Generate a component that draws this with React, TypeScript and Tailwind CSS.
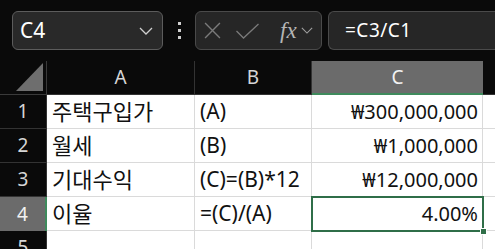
import React from 'react';

const font = { fontFamily: '"Noto Sans", "Noto Sans CJK KR", sans-serif' };

const cols = ['A', 'B', 'C'];

const rows: { n: number; a: string; b: string; c: string }[] = [
  { n: 1, a: '주택구입가', b: '(A)', c: '₩300,000,000' },
  { n: 2, a: '월세', b: '(B)', c: '₩1,000,000' },
  { n: 3, a: '기대수익', b: '(C)=(B)*12', c: '₩12,000,000' },
  { n: 4, a: '이율', b: '=(C)/(A)', c: '4.00%' },
  { n: 5, a: '', b: '', c: '' },
];

const Chevron = ({ className }: { className?: string }) => (
  <svg viewBox="0 0 14 8" className={className} fill="none" stroke="currentColor" strokeWidth="1.3">
    <path d="M1 1l6 6 6-6" />
  </svg>
);

export default function App() {
  return (
    <div className="w-[495px] h-[249px] overflow-hidden bg-[#0a0a0a] text-white" style={font}>
      {/* formula bar */}
      <div className="h-[61px] flex items-start pt-[11px] pl-[12px] gap-0">
        <div className="w-[151px] h-[39px] rounded-[6px] border border-[#5c5c5c] bg-[#292929] flex items-center pl-[7px] pr-[9px]">
          <span className="text-[21px] leading-none text-white flex-1">C4</span>
          <Chevron className="w-[14px] h-[8px] text-[#cfcfcf]" />
        </div>
        <div className="w-[32px] h-[39px] flex flex-col items-center justify-center gap-[4px]">
          <div className="w-[3px] h-[3px] bg-[#cfcfcf]" />
          <div className="w-[3px] h-[3px] bg-[#cfcfcf]" />
          <div className="w-[3px] h-[3px] bg-[#cfcfcf]" />
        </div>
        <div className="w-[127px] h-[39px] rounded-[6px] border border-[#4a4a4a] bg-[#262626] flex items-center pl-[8px]">
          <svg viewBox="0 0 16 16" className="w-[17px] h-[17px] text-[#7a7a7a]" fill="none" stroke="currentColor" strokeWidth="1.3">
            <path d="M1 1l14 14M15 1L1 15" />
          </svg>
          <svg viewBox="0 0 24 16" className="w-[25px] h-[16px] ml-[14px] text-[#7a7a7a]" fill="none" stroke="currentColor" strokeWidth="1.3">
            <path d="M1 8l7 7L23 1" />
          </svg>
          <span
            className="ml-[20px] text-[23px] leading-none italic text-[#b5b5b5]"
            style={{ fontFamily: '"Liberation Serif", serif' }}
          >
            fx
          </span>
          <Chevron className="ml-[4px] w-[12px] h-[7px] text-[#a0a0a0]" />
        </div>
        <div className="ml-[6px] flex-1 h-[39px] rounded-l-[6px] border border-r-0 border-[#4a4a4a] bg-[#262626] flex items-center pl-[16px]">
          <span className="text-[19px] leading-none text-white tracking-[0.5px]">=C3/C1</span>
        </div>
      </div>

      {/* grid */}
      <div className="relative grid grid-cols-[47px_148px_117px_171px_1fr] auto-rows-[34px]">
        {/* header row */}
        <div className="relative border-r border-b border-[#3a3a3a] bg-[#0a0a0a]">
          <div className="absolute right-[3px] bottom-[3px] w-0 h-0 border-l-[27px] border-l-transparent border-b-[28px] border-b-[#6e6e6e]" />
        </div>
        {cols.map((c) =>
          c === 'C' ? (
            <div key={c} className="bg-[#6b6b6b] border-b-2 border-[#3e8a5c] flex items-center justify-center text-[19px] text-[#f2f2f2]">
              {c}
            </div>
          ) : (
            <div key={c} className="border-r border-b border-[#333] flex items-center justify-center text-[19px] text-[#d6d6d6]">
              {c}
            </div>
          )
        )}
        <div className="border-b border-[#333]" />

        {rows.map((r) => (
          <React.Fragment key={r.n}>
            <div
              className={
                r.n === 4
                  ? 'bg-[#6b6b6b] border-r-2 border-[#3e8a5c] flex items-center justify-center text-[19px] text-[#f2f2f2]'
                  : 'bg-[#0a0a0a] border-r border-b border-[#333] flex items-center justify-center text-[19px] text-[#d6d6d6]'
              }
            >
              {r.n}
            </div>
            <div className="bg-white border-r border-b border-[#dadada] flex items-center pl-[5px] text-[22px] text-[#111]">
              {r.a}
            </div>
            <div className="bg-white border-r border-b border-[#dadada] flex items-center pl-[5px] text-[21px] text-[#111]">
              {r.b}
            </div>
            <div className="bg-white border-r border-b border-[#dadada] flex items-center justify-end pr-[4px] text-[20px] text-[#111]">
              {r.c}
            </div>
            <div className="bg-white border-b border-[#dadada]" />
          </React.Fragment>
        ))}

        {/* active cell C4 */}
        <div className="absolute left-[311px] top-[135px] w-[173px] h-[36px] border-2 border-[#2f6e48] pointer-events-none">
          <div className="absolute right-[-5px] bottom-[-5px] w-[7px] h-[7px] bg-[#2f6e48] border border-white" />
        </div>
      </div>
    </div>
  );
}
